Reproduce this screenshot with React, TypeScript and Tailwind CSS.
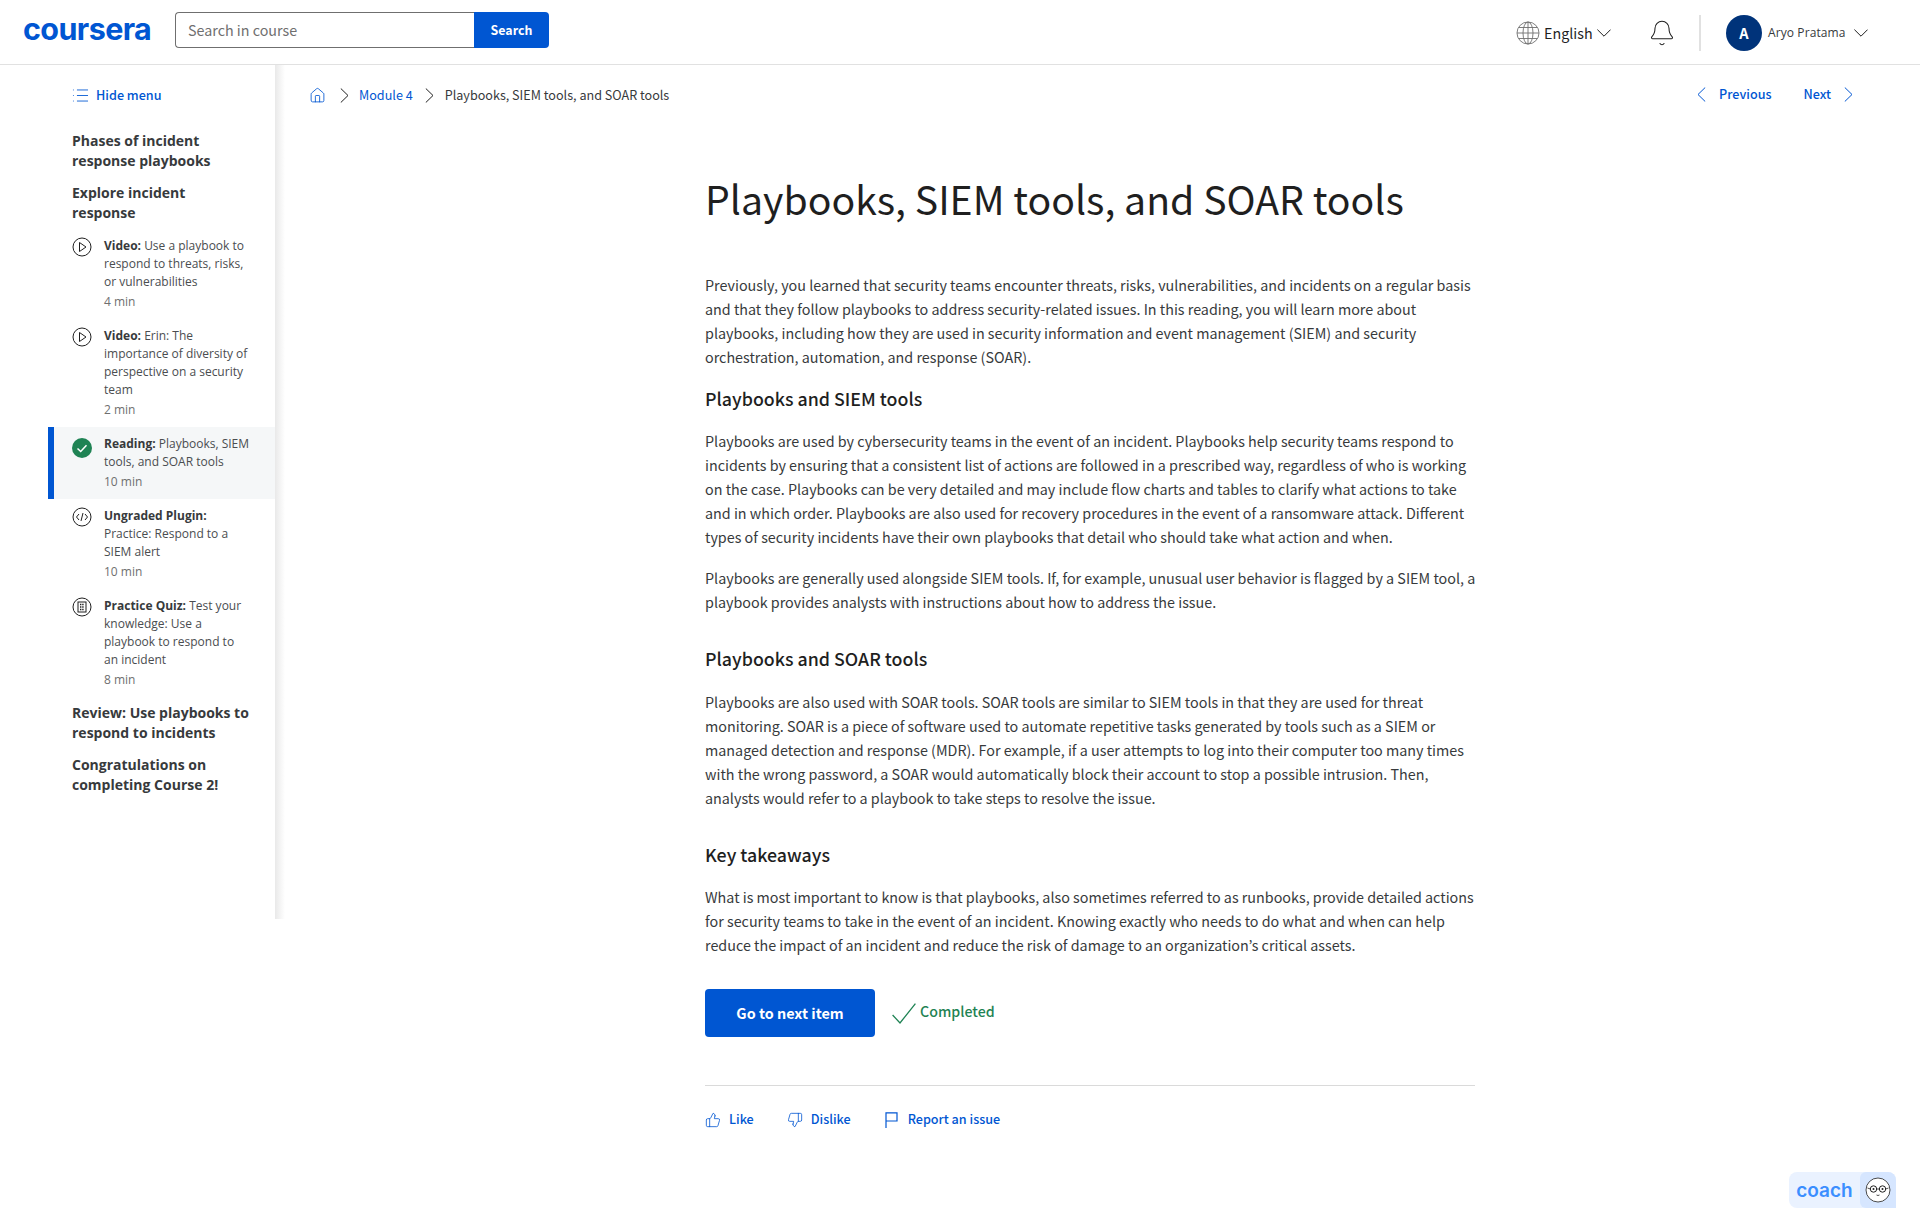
import React from "react";
import { Bell, Home, ThumbsUp, ThumbsDown, List } from "lucide-react";

const SS = "font-['Noto_Sans_CJK_JP','Noto_Sans',sans-serif]";
const OS = "font-['Open_Sans',sans-serif]";

function GlobeIcon() {
  return (
    <svg width="24" height="24" viewBox="0 0 24 24" fill="none" stroke="#6f6f6f" strokeWidth="0.9">
      <circle cx="12" cy="12" r="11" />
      <ellipse cx="12" cy="12" rx="5" ry="11" />
      <path d="M12 1 V23 M1 12 H23 M2.6 6.5 H21.4 M2.6 17.5 H21.4" />
    </svg>
  );
}
function ChevDown({ cls }: { cls?: string }) {
  return (
    <svg width="14" height="8" viewBox="0 0 14 8" fill="none" stroke="#1f1f1f" strokeWidth="1" className={cls}>
      <path d="M0.4 0.6 L7 7.2 L13.6 0.6" />
    </svg>
  );
}
function ChevRight({ color = "#1f1f1f", cls }: { color?: string; cls?: string }) {
  return (
    <svg width="9" height="15" viewBox="0 0 9 15" fill="none" stroke={color} strokeWidth="1" className={cls}>
      <path d="M0.8 0.5 L8 7.5 L0.8 14.5" />
    </svg>
  );
}
function ChevLeft({ color = "#1f1f1f", cls }: { color?: string; cls?: string }) {
  return (
    <svg width="9" height="15" viewBox="0 0 9 15" fill="none" stroke={color} strokeWidth="1" className={cls}>
      <path d="M8.2 0.5 L1 7.5 L8.2 14.5" />
    </svg>
  );
}
function PlayIcon() {
  return (
    <svg width="20" height="20" viewBox="0 0 20 20" fill="none" stroke="#1f1f1f" strokeWidth="1">
      <circle cx="10" cy="10" r="9" />
      <path d="M7.5 5.5 L14 10 L7.5 14.5 Z" />
    </svg>
  );
}
function CodeIcon() {
  return (
    <svg width="20" height="20" viewBox="0 0 20 20" fill="none" stroke="#1f1f1f" strokeWidth="1">
      <circle cx="10" cy="10" r="9" />
      <path d="M7 7 L4.5 10 L7 13 M13 7 L15.5 10 L13 13 M11 6 L9 14" />
    </svg>
  );
}
function QuizIcon() {
  return (
    <svg width="20" height="20" viewBox="0 0 20 20" fill="none" stroke="#1f1f1f" strokeWidth="1">
      <circle cx="10" cy="10" r="9" />
      <rect x="6" y="5" width="8" height="10" />
      <path d="M8 7.5 H12 M8 10 H12 M8 12.5 H12" strokeWidth="1.4" strokeDasharray="1.4 0.8" />
    </svg>
  );
}
function DoneIcon() {
  return (
    <svg width="20" height="20" viewBox="0 0 20 20">
      <circle cx="10" cy="10" r="10" fill="#1f8354" />
      <path d="M5.5 10.5 L8.7 13.5 L14.5 7.2" fill="none" stroke="#fff" strokeWidth="1.5" />
    </svg>
  );
}

function Heading({ children, cls }: { children: React.ReactNode; cls: string }) {
  return <div className={`${OS} w-[203px] pl-6 text-[14px] leading-[20px] font-bold text-[#373a3c] ${cls}`}>{children}</div>;
}

function Item({ icon, label, text, time, active, cls }: { icon: React.ReactNode; label: string; text: string; time: string; active?: boolean; cls?: string }) {
  return (
    <div className={`${OS} flex gap-[12px] ${active ? "bg-[#f5f7f8] border-l-[6px] border-[#0056d2] pl-[18px] pt-[8px] pb-[8px]" : "pl-6"} ${cls ?? ""}`}>
      <div className={`w-5 shrink-0 ${active ? "pt-[3px]" : ""}`}>{icon}</div>
      <div className="w-[146px] text-[12px] leading-[18px] text-[#4a4d50]">
        <div><span className="font-bold text-[#373a3c]">{label}</span> {text}</div>
        <div className="mt-[2px] text-[#6f6f6f]">{time}</div>
      </div>
    </div>
  );
}

function P({ children, cls }: { children: React.ReactNode; cls?: string }) {
  return <p className={`text-[14.33px] leading-[24px] text-[#373a3c] ${cls ?? ""}`}>{children}</p>;
}
function H2({ children, cls }: { children: React.ReactNode; cls?: string }) {
  return <h2 className={`text-[17.8px] leading-[22px] font-medium text-[#1f1f1f] ${cls ?? ""}`}>{children}</h2>;
}

export default function App() {
  return (
    <div className={`${SS} relative min-h-[1232px] w-full bg-white overflow-hidden`}>
      <header className="flex h-[65px] items-center border-b border-[#e1e1e1] pl-[23px] pr-[52px]">
        <div className="flex w-[152px] pb-[6px] font-['Inter',sans-serif] text-[30.5px] font-bold leading-none tracking-[-0.6px] text-[#0056d2]">coursera</div>
        <div className="mb-[5px] flex h-[36px] w-[374px]">
          <div className="flex flex-1 items-center rounded-l-[4px] border border-[#6f6f6f] border-r-0 pl-[12px] pt-[1px] text-[14.3px] text-[#6f6f6f]">Search in course</div>
          <div className="flex w-[75px] items-center justify-center rounded-r-[4px] bg-[#0056d2] pt-[1px] text-[12.4px] font-bold text-white">Search</div>
        </div>
        <div className="ml-auto mt-[2px] flex items-center">
          <GlobeIcon />
          <span className="ml-[4px] w-[48px] text-[14.3px] leading-[24px] text-[#1f1f1f]">English</span>
          <ChevDown cls="ml-[5px]" />
          <Bell size={28} strokeWidth={0.9} className="ml-[37px] text-[#1f1f1f]" />
          <div className="ml-[23px] h-[36px] w-[2px] bg-[#e1e1e1]" />
          <div className="ml-[25px] flex h-[36px] w-[36px] items-center justify-center rounded-full bg-[#00337a] text-[14.5px] font-bold text-white">A</div>
          <span className={`${OS} ml-[6px] w-[78px] whitespace-nowrap text-[12px] tracking-[0.1px] text-[#373a3c]`}>Aryo Pratama</span>
          <ChevDown cls="ml-[8px]" />
        </div>
      </header>

      <div className="flex">
        <aside className="h-[854px] w-[275px] shrink-0 pl-[48px] bg-white">
          <div className="flex h-[60px] items-center pl-[23px] text-[12.6px] font-medium text-[#0056d2]">
            <List size={19} strokeWidth={1.1} />
            <span className="ml-[6px]">Hide menu</span>
          </div>
          <Heading cls="mt-[6px]">Phases of incident response playbooks</Heading>
          <Heading cls="mt-[12px]">Explore incident response</Heading>
          <Item cls="mt-[14px]" icon={<PlayIcon />} label="Video:" text="Use a playbook to respond to threats, risks, or vulnerabilities" time="4 min" />
          <Item cls="mt-[16px]" icon={<PlayIcon />} label="Video:" text="Erin: The importance of diversity of perspective on a security team" time="2 min" />
          <Item cls="mt-[8px]" active icon={<DoneIcon />} label="Reading:" text="Playbooks, SIEM tools, and SOAR tools" time="10 min" />
          <Item cls="mt-[8px]" icon={<CodeIcon />} label="Ungraded Plugin:" text="Practice: Respond to a SIEM alert" time="10 min" />
          <Item cls="mt-[16px]" icon={<QuizIcon />} label="Practice Quiz:" text="Test your knowledge: Use a playbook to respond to an incident" time="8 min" />
          <Heading cls="mt-[14px]">Review: Use playbooks to respond to incidents</Heading>
          <Heading cls="mt-[12px]">Congratulations on completing Course 2!</Heading>
        </aside>
        <div className="h-[854px] w-[10px] shrink-0 bg-gradient-to-r from-[#e9e9e9] to-white" />

        <main className="relative flex-1">
          <div className="flex h-[60px] items-center pl-[24px] pr-[67px] text-[12.6px]">
            <Home size={17} strokeWidth={1.2} className="text-[#0056d2]" />
            <ChevRight cls="ml-[14px]" />
            <span className="ml-[10px] text-[#0056d2]">Module 4</span>
            <ChevRight cls="ml-[12px]" />
            <span className="ml-[11px] text-[#373a3c]">Playbooks, SIEM tools, and SOAR tools</span>
            <div className="ml-auto flex items-center pb-[1px] font-medium text-[#0056d2]">
              <ChevLeft color="#0056d2" />
              <span className="ml-[13px]">Previous</span>
              <span className="ml-[32px]">Next</span>
              <ChevRight color="#0056d2" cls="ml-[13px]" />
            </div>
          </div>

          <article className="ml-[420px] w-[770px]">
            <h1 className="mt-[45px] text-[39.2px] leading-[56px] font-normal text-[#1f1f1f]">Playbooks, SIEM tools, and SOAR tools</h1>
            <P cls="mt-[47px]">Previously, you learned that security teams encounter threats, risks, vulnerabilities, and incidents on a regular basis and that they follow playbooks to address security-related issues. In this reading, you will learn more about playbooks, including how they are used in security information and event management (SIEM) and security orchestration, automation, and response (SOAR).</P>
            <H2 cls="mt-[18px]">Playbooks and SIEM tools</H2>
            <P cls="mt-[20px]">Playbooks are used by cybersecurity teams in the event of an incident. Playbooks help security teams respond to incidents by ensuring that a consistent list of actions are followed in a prescribed way, regardless of who is working on the case. Playbooks can be very detailed and may include flow charts and tables to clarify what actions to take and in which order. Playbooks are also used for recovery procedures in the event of a ransomware attack. Different types of security incidents have their own playbooks that detail who should take what action and when.</P>
            <P cls="mt-[17px] -mr-[4px]">Playbooks are generally used alongside SIEM tools. If, for example, unusual user behavior is flagged by a SIEM tool, a playbook provides analysts with instructions about how to address the issue.</P>
            <H2 cls="mt-[33px]">Playbooks and SOAR tools</H2>
            <P cls="mt-[21px]">Playbooks are also used with SOAR tools. SOAR tools are similar to SIEM tools in that they are used for threat monitoring. SOAR is a piece of software used to automate repetitive tasks generated by tools such as a SIEM or managed detection and response (MDR). For example, if a user attempts to log into their computer too many times with the wrong password, a SOAR would automatically block their account to stop a possible intrusion. Then, analysts would refer to a playbook to take steps to resolve the issue.</P>
            <H2 cls="mt-[33px]">Key takeaways</H2>
            <P cls="mt-[20px]">What is most important to know is that playbooks, also sometimes referred to as runbooks, provide detailed actions for security teams to take in the event of an incident. Knowing exactly who needs to do what and when can help reduce the impact of an incident and reduce the risk of damage to an organization’s critical assets.</P>
            <div className="mt-[32px] flex items-center">
              <div className="flex h-[48px] w-[170px] items-center justify-center rounded-[4px] bg-[#0056d2] text-[14.4px] font-bold text-white">Go to next item</div>
              <svg width="24" height="21" viewBox="0 0 24 21" fill="none" stroke="#1f8354" strokeWidth="1.3" className="ml-[17px]">
                <path d="M0.6 12 L8 20 L23.4 0.6" />
              </svg>
              <span className="ml-[4px] mb-[2px] text-[14.2px] font-medium text-[#1f8354]">Completed</span>
            </div>
            <div className="mt-[48px] flex h-[68px] items-center border-t border-[#dadada] text-[12.6px] font-medium text-[#0056d2]">
              <ThumbsUp size={16} strokeWidth={1.2} />
              <span className="ml-[8px]">Like</span>
              <ThumbsDown size={16} strokeWidth={1.2} className="ml-[33px]" />
              <span className="ml-[8px]">Dislike</span>
              <svg width="13" height="16" viewBox="0 0 13 16" fill="none" stroke="#0056d2" strokeWidth="1.2" className="ml-[34px]">
                <path d="M1 16 V0.8 H12 V9 H1" />
              </svg>
              <span className="ml-[10px]">Report an issue</span>
            </div>
          </article>
        </main>
      </div>

      <div className="absolute left-[1789px] top-[1172px] flex h-[36px] w-[107px] overflow-hidden rounded-l-[8px] rounded-tr-[8px] bg-[#eaf2ff]">
        <div className="flex w-[71px] items-center justify-center font-['Inter',sans-serif] text-[19px] font-semibold leading-none text-[#3b8eff]">coach</div>
        <div className="flex flex-1 items-center justify-center rounded-l-[6px] bg-[#d6e6ff]">
          <svg width="26" height="26" viewBox="0 0 26 26" fill="none">
            <circle cx="13" cy="13" r="12" fill="#fff" stroke="#1f1f1f" strokeWidth="0.8" />
            <circle cx="8.5" cy="12" r="3.2" stroke="#1f1f1f" strokeWidth="1" />
            <circle cx="17.5" cy="12" r="3.2" stroke="#1f1f1f" strokeWidth="1" />
            <path d="M11.7 12 H14.3 M2.5 11 L5.3 12 M23.5 11 L20.7 12 M11.5 18 Q13 19 14.5 18" stroke="#1f1f1f" strokeWidth="0.8" />
            <circle cx="8.5" cy="12" r="1" fill="#1f1f1f" />
            <circle cx="17.5" cy="12" r="1" fill="#1f1f1f" />
          </svg>
        </div>
      </div>
    </div>
  );
}
